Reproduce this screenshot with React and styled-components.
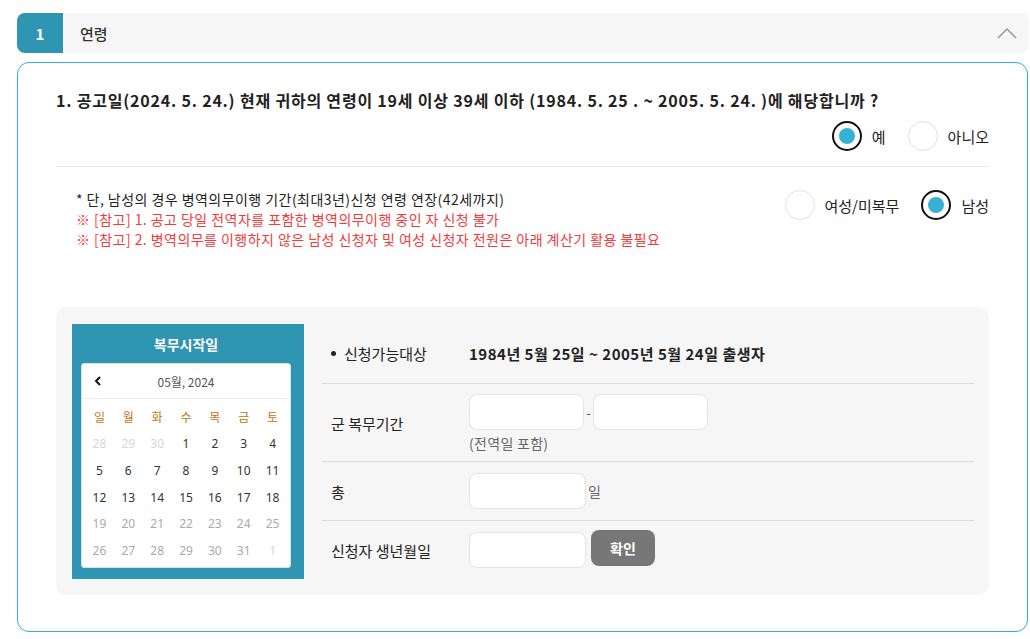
import React, { useState } from "react";
import styled, { createGlobalStyle } from "styled-components";

const GlobalStyle = createGlobalStyle`
  body {
    margin: 0;
    background: #fff;
    font-family: "Noto Sans CJK KR", "Noto Sans", sans-serif;
    color: #222;
  }
`;

const Page = styled.div`
  padding: 13px 1px 0 17px;
`;

const StepBar = styled.div`
  display: flex;
  align-items: center;
  height: 40px;
  background: #f6f6f6;
  border-radius: 8px;
  overflow: hidden;
`;

const StepNum = styled.div`
  width: 46px;
  height: 100%;
  display: flex;
  align-items: center;
  justify-content: center;
  background: #2e95b2;
  color: #fff;
  font-size: 15px;
  font-weight: 700;
`;

const StepTitle = styled.div`
  flex: 1;
  padding-left: 17px;
  font-size: 15px;
  font-weight: 500;
  color: #333;
`;

const Chevron = styled.div`
  width: 20px;
  margin-right: 12px;
  display: flex;
`;

const Card = styled.div`
  margin-top: 9px;
  margin-right: 1px;
  border: 1px solid #33afd2;
  border-radius: 12px;
  padding: 25px 38px 36px 38px;
`;

const Question = styled.div`
  font-size: 16px;
  line-height: 24px;
  font-weight: 700;
  letter-spacing: 0.8px;
  color: #222;
`;

const RadioRow = styled.div`
  display: flex;
  justify-content: flex-end;
  align-items: center;
  gap: 22px;
  margin-top: ${(p) => p.top || 0}px;
`;

const RadioItem = styled.label`
  display: flex;
  align-items: center;
  gap: 10px;
  font-size: 15px;
  color: #222;
  cursor: pointer;
`;

const RadioCircle = styled.span`
  box-sizing: border-box;
  width: 30px;
  height: 30px;
  border-radius: 50%;
  border: ${(p) => (p.checked ? "2px solid #111" : "1px solid #e2e2e2")};
  background: #fff;
  display: flex;
  align-items: center;
  justify-content: center;
  &::after {
    content: "";
    width: 16px;
    height: 16px;
    border-radius: 50%;
    background: ${(p) => (p.checked ? "#36b0d4" : "transparent")};
  }
`;

const Divider = styled.hr`
  border: 0;
  border-top: 1px solid #e8e8e8;
  margin: 15px 0 0;
`;

const NoteArea = styled.div`
  display: flex;
  justify-content: space-between;
  align-items: flex-start;
  padding: 22px 0 0 20px;
`;

const Notes = styled.div`
  font-size: 14px;
  line-height: 20px;
  letter-spacing: 0.45px;
`;

const NoteLine = styled.div`
  color: ${(p) => (p.red ? "#f23b3b" : "#222")};
`;

const Calculator = styled.div`
  display: flex;
  margin-top: 58px;
  background: #f6f6f6;
  border-radius: 10px;
  padding: 17px 15px 16px 16px;
`;

const CalPanel = styled.div`
  width: 232px;
  flex-shrink: 0;
  background: #2e95b2;
  padding: 0 13px 11px 9px;
  box-sizing: border-box;
`;

const CalTitle = styled.div`
  height: 39px;
  display: flex;
  align-items: center;
  justify-content: center;
  color: #fff;
  font-size: 14px;
  font-weight: 700;
`;

const CalBox = styled.div`
  background: #fff;
  border-radius: 3px;
  border: 1px solid #ddd;
  box-sizing: border-box;
  height: 205px;
`;

const CalHead = styled.div`
  height: 34px;
  display: flex;
  align-items: center;
  border-bottom: 1px solid #ececec;
`;

const PrevBtn = styled.span`
  width: 30px;
  display: flex;
  justify-content: center;
  margin-left: 1px;
`;

const MonthLabel = styled.div`
  flex: 1;
  text-align: center;
  margin-right: 31px;
  font-size: 12px;
  color: #555;
`;

const DayGrid = styled.div`
  display: grid;
  grid-template-columns: repeat(7, 1fr);
  padding: 5px 3px 0 3px;
  grid-auto-rows: 26.6px;
`;

const DayCell = styled.div`
  display: flex;
  align-items: center;
  justify-content: center;
  font-size: 12px;
  font-family: "Noto Sans", "Noto Sans CJK KR", sans-serif;
  color: ${(p) => p.color};
`;

const Rows = styled.div`
  flex: 1;
  margin-left: 18px;
`;

const Row = styled.div`
  display: grid;
  grid-template-columns: 138px 1fr;
  align-items: center;
  padding: ${(p) => p.pad || "0"};
  padding-left: 9px;
  min-height: ${(p) => p.h}px;
  box-sizing: border-box;
  border-top: ${(p) => (p.first ? "none" : "1px solid #dedede")};
`;

const Label = styled.div`
  font-size: 15px;
  color: #222;
  display: flex;
  align-items: center;
  gap: 8px;
`;

const Bullet = styled.span`
  width: 5px;
  height: 5px;
  border-radius: 50%;
  background: #222;
`;

const Target = styled.div`
  font-size: 15px;
  font-weight: 700;
  letter-spacing: 0.5px;
`;

const Field = styled.div`
  display: flex;
  align-items: center;
  gap: ${(p) => p.gap || 2}px;
  font-size: 14px;
  color: #666;
`;

const Input = styled.input`
  box-sizing: border-box;
  width: ${(p) => p.w || 115}px;
  height: 36px;
  border: 1px solid #e4e4e4;
  border-radius: 8px;
  background: #fff;
  outline: none;
`;

const Hint = styled.div`
  font-size: 14px;
  letter-spacing: 0.3px;
  color: #666;
  margin-top: 3px;
`;

const ConfirmBtn = styled.button`
  width: 64px;
  height: 36px;
  margin-top: -4px;
  border: 0;
  border-radius: 8px;
  background: #777;
  color: #fff;
  font-family: inherit;
  font-size: 14px;
  font-weight: 700;
`;

const weekDays = ["일", "월", "화", "수", "목", "금", "토"];

const days = [
  [28, "prev"], [29, "prev"], [30, "prev"], [1], [2], [3], [4],
  [5], [6], [7], [8], [9], [10], [11],
  [12], [13], [14], [15], [16], [17], [18],
  [19, "off"], [20, "off"], [21, "off"], [22, "off"], [23, "off"], [24, "off"], [25, "off"],
  [26, "off"], [27, "off"], [28, "off"], [29, "off"], [30, "off"], [31, "off"], [1, "prev"],
];

const dayColor = { prev: "#d6d6d6", off: "#aaa" };

const App = () => {
  const [ageOk, setAgeOk] = useState(true);
  const [male, setMale] = useState(true);

  return (
    <Page>
      <GlobalStyle />
      <StepBar>
        <StepNum>1</StepNum>
        <StepTitle>연령</StepTitle>
        <Chevron>
          <svg width="20" height="12" viewBox="0 0 20 12">
            <path d="M1 11 L10 2 L19 11" fill="none" stroke="#9a9a9a" strokeWidth="1.5" />
          </svg>
        </Chevron>
      </StepBar>

      <Card>
        <Question>
          1. 공고일(2024. 5. 24.) 현재 귀하의 연령이 19세 이상 39세 이하 (1984. 5. 25 . ~ 2005. 5. 24. )에 해당합니까 ?
        </Question>
        <RadioRow top={9}>
          <RadioItem onClick={() => setAgeOk(true)}>
            <RadioCircle checked={ageOk} />예
          </RadioItem>
          <RadioItem onClick={() => setAgeOk(false)}>
            <RadioCircle checked={!ageOk} />아니오
          </RadioItem>
        </RadioRow>
        <Divider />

        <NoteArea>
          <Notes>
            <NoteLine>* 단, 남성의 경우 병역의무이행 기간(최대3년)신청 연령 연장(42세까지)</NoteLine>
            <NoteLine red>※ [참고] 1. 공고 당일 전역자를 포함한 병역의무이행 중인 자 신청 불가</NoteLine>
            <NoteLine red>※ [참고] 2. 병역의무를 이행하지 않은 남성 신청자 및 여성 신청자 전원은 아래 계산기 활용 불필요</NoteLine>
          </Notes>
          <RadioRow top={1}>
            <RadioItem onClick={() => setMale(false)}>
              <RadioCircle checked={!male} />여성/미복무
            </RadioItem>
            <RadioItem onClick={() => setMale(true)}>
              <RadioCircle checked={male} />남성
            </RadioItem>
          </RadioRow>
        </NoteArea>

        <Calculator>
          <CalPanel>
            <CalTitle>복무시작일</CalTitle>
            <CalBox>
              <CalHead>
                <PrevBtn>
                  <svg width="8" height="10" viewBox="0 0 8 10">
                    <path d="M6 1 L2 5 L6 9" fill="none" stroke="#111" strokeWidth="2" />
                  </svg>
                </PrevBtn>
                <MonthLabel>05월, 2024</MonthLabel>
              </CalHead>
              <DayGrid>
                {weekDays.map((d) => (
                  <DayCell key={d} color="#c27712">{d}</DayCell>
                ))}
                {days.map(([n, kind], i) => (
                  <DayCell key={i} color={kind ? dayColor[kind] : "#333"}>{n}</DayCell>
                ))}
              </DayGrid>
            </CalBox>
          </CalPanel>

          <Rows>
            <Row first h={59}>
              <Label><Bullet />신청가능대상</Label>
              <Target>1984년 5월 25일 ~ 2005년 5월 24일 출생자</Target>
            </Row>
            <Row h={78} pad="9px 0 8px">
              <Label>군 복무기간</Label>
              <div>
                <Field>
                  <Input />-<Input />
                </Field>
                <Hint>(전역일 포함)</Hint>
              </div>
            </Row>
            <Row h={59}>
              <Label>총</Label>
              <Field><Input w={117} />일</Field>
            </Row>
            <Row h={59}>
              <Label>신청자 생년월일</Label>
              <Field gap={5}>
                <Input w={117} />
                <ConfirmBtn>확인</ConfirmBtn>
              </Field>
            </Row>
          </Rows>
        </Calculator>
      </Card>
    </Page>
  );
};

export default App;
